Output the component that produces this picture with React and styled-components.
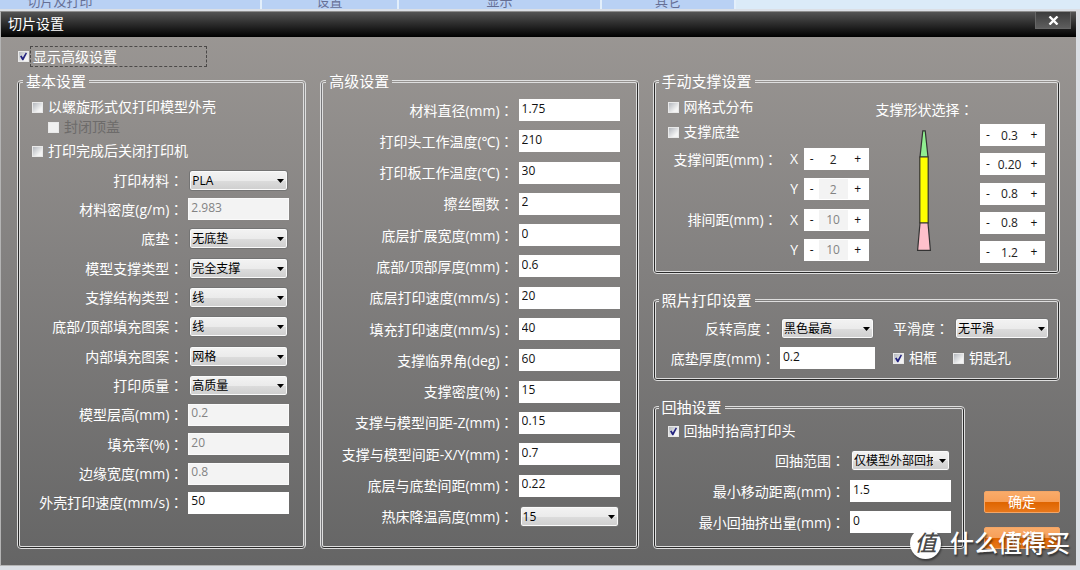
import React from "react";
import styled, { createGlobalStyle } from "styled-components";

const GlobalStyle = createGlobalStyle`
  *, *::before, *::after { box-sizing: border-box; }
  html { background: #d6e3f3; }
  body {
    margin: 0;
    overflow: hidden;
    font-family: "Open Sans", "Noto Sans", "Noto Sans CJK SC", sans-serif;
    font-size: 14px;
    line-height: 20px;
    color: #fff;
  }
  button, input, select { font-family: inherit; margin: 0; }
`;

const Page = styled.div`
  background: #dbdfe5;
`;

/* Ribbon of the application behind the dialog */
const Ribbon = styled.div`
  display: grid;
  grid-template-columns: 262fr 137fr 203fr 134fr 344fr;
  height: 9px;
  overflow: hidden;
  background: #dbebf8;
`;

const RibbonGroup = styled.div`
  display: flex;
  align-items: flex-end;
  justify-content: center;
  height: 9px;
  padding-right: ${(p) => p.$shift || 0}px;
  background: #b9d1f4;
  border-right: 2px solid #e3effb;
  color: #666f94;
  font-size: 13px;
  line-height: 16px;
`;

/* Dialog window */
const Window = styled.section`
  margin: 2px 4px 0 0;
  border: 1px solid #b4b4b4;
  border-top-color: #8e8e8e;
  border-right: 0;
  background: linear-gradient(#9c9895, #838180 45%, #656565);
`;

const TitleBar = styled.header`
  display: flex;
  justify-content: space-between;
  align-items: flex-start;
  height: 25px;
  padding: 0 5px 0 7px;
  background: linear-gradient(#545454, #000);
`;

const Title = styled.h1`
  margin: 0;
  font-size: 14px;
  font-weight: 400;
  line-height: 24px;
`;

const CloseButton = styled.button`
  display: flex;
  align-items: center;
  justify-content: center;
  width: 36px;
  height: 17px;
  padding: 0;
  border: 1px solid #666;
  border-top: 0;
  background: linear-gradient(#3c3c3c, #5e5e5e);
`;

const Body = styled.div`
  padding: 9px 16px 16px;
`;

const Columns = styled.div`
  display: grid;
  grid-template-columns: 289fr 318fr 407fr;
  column-gap: 14px;
  margin-top: 4px;
`;

const RightColumn = styled.div`
  display: flex;
  flex-direction: column;
  gap: 16px;
`;

const BottomRow = styled.div`
  display: flex;
  flex: 1;
  gap: 19px;
`;

/* Group box: double light frame whose gap is dark on some sides */
const Group = styled.fieldset`
  min-width: 0;
  margin: 0;
  padding: 0;
  flex: ${(p) => p.$flex || "none"};
  border: 3px double #dedede;
  border-radius: 4px;
  background-origin: border-box;
  background-repeat: no-repeat;
  background-image:
    linear-gradient(#2a2a2a, #2a2a2a),
    linear-gradient(${(p) => (p.$left ? "#2a2a2a, #2a2a2a" : "#77777a, #77777a")}),
    linear-gradient(${(p) => (p.$right ? "#2a2a2a, #2a2a2a" : "#8b8b8b, #8b8b8b")});
  background-size: calc(100% - 4px) 1px, 1px calc(100% - 4px), 1px calc(100% - 4px);
  background-position: 2px calc(100% - 1px), 1px 2px, calc(100% - 1px) 2px;
`;

const GroupBody = styled.div`
  padding: ${(p) => p.$pad};
`;

const Legend = styled.legend`
  margin-left: 3px;
  padding: 0 3px;
  height: 20px;
  font-size: 15px;
  line-height: 20px;
`;

const Stack = styled.div`
  display: flex;
  flex-direction: column;
  gap: ${(p) => p.$gap || 0}px;
`;

const SpacedRows = styled.div`
  display: flex;
  flex-direction: column;
  justify-content: space-between;
  min-height: ${(p) => p.$min}px;
  margin-top: ${(p) => p.$top || 0}px;
`;

const Row = styled.div`
  display: flex;
  align-items: center;
  justify-content: flex-end;
  height: 22px;
`;

const Label = styled.label`
  white-space: nowrap;
  padding-right: 5px;
`;

const Colon = styled.span`
  font-family: "Noto Sans CJK TC", sans-serif;
`;

const TextInput = styled.input`
  flex: none;
  width: ${(p) => p.$w || 101}px;
  height: 22px;
  padding: 0 3px 4px 2px;
  border: 1px solid #fff;
  border-radius: 0;
  background: #fff;
  color: #111;
  font-size: 12px;
  line-height: 16px;

  &:disabled {
    border-color: #fafafa;
    background: #f3f3f3;
    color: #838383;
  }
`;

const SelectBox = styled.span`
  position: relative;
  flex: none;
  width: ${(p) => p.$w || 101}px;
  height: 21px;
  padding: 0 1px;
`;

const SelectInput = styled.select`
  appearance: none;
  display: block;
  width: 100%;
  height: 21px;
  padding: 0 16px 0 2px;
  border: 1px solid #747474;
  border-radius: 3px;
  box-shadow: inset 0 0 0 1px #fafafa;
  background: linear-gradient(#f3f3f3, #ebebeb 50%, #dcdcdc 51%, #cecece);
  color: #000;
  font-size: 12px;
`;

const Arrow = styled.svg`
  position: absolute;
  top: 9px;
  right: 5px;
  pointer-events: none;
`;

const CheckLabel = styled.label`
  display: inline-flex;
  align-items: center;
  gap: 5px;
  height: 20px;
  white-space: nowrap;
  margin-left: ${(p) => p.$indent || 0}px;
  margin-top: ${(p) => p.$top || 0}px;
  color: ${(p) => (p.$off ? "#6d6b6a" : "#fff")};
`;

const CheckBox = styled.span`
  position: relative;
  flex: none;
  width: 11px;
  height: 11px;
`;

const CheckInput = styled.input`
  appearance: none;
  display: block;
  width: 11px;
  height: 11px;
  border: 1px solid #e9e9e9;
  background: linear-gradient(135deg, #b4b8be, #f4f4f4 75%);

  &:disabled { background: #f0f0f0; }
  & + svg { display: none; }
  &:checked + svg { display: block; }
`;

const Tick = styled.svg`
  position: absolute;
  inset: 0;
  pointer-events: none;
`;

const FocusText = styled.span`
  width: 177px;
  height: 21px;
  padding-left: 2px;
  border: 1px dashed #4b4948;
  line-height: 19px;
`;

const HeadCheck = styled(CheckLabel)`
  display: flex;
  gap: 1px;
  height: 21px;
  margin-left: 1px;
`;

const StepperBox = styled.span`
  display: flex;
  flex: none;
  height: 22px;
  border: 1px solid #fff;
  background: #fff;
`;

const StepButton = styled.button`
  width: ${(p) => p.$w}px;
  padding: 0;
  border: 0;
  background: #fff;
  color: #111;
  font-size: 12px;
  line-height: 18px;
`;

const StepValue = styled.input`
  width: 29px;
  padding: 0;
  border: 0;
  background: #fff;
  color: #222;
  font-size: 12px;
  text-align: center;

  &:disabled {
    background: #f3f3f3;
    color: #838383;
  }
`;

const Axis = styled.span`
  width: 11px;
  margin: 0 4px 0 6px;
  text-align: center;
`;

const ManualLayout = styled.div`
  display: flex;
  gap: 7px;
`;

const ManualLeft = styled.div`
  flex: none;
  width: 201px;
`;

const ManualRight = styled.div`
  flex: 1;
  padding-top: 2px;
`;

const ShapeRow = styled.div`
  display: flex;
  justify-content: space-between;
  margin-top: 4px;
  padding-left: 40px;
`;

const ShapeDrawing = styled.svg`
  margin-top: 6px;
`;

const PhotoTail = styled.div`
  display: flex;
  flex: none;
  justify-content: ${(p) => (p.$spread ? "space-between" : "flex-start")};
  align-items: center;
  gap: ${(p) => (p.$spread ? 0 : 16)}px;
  width: 174px;
  padding-left: 18px;
`;

const Actions = styled.div`
  display: flex;
  flex: none;
  flex-direction: column;
  justify-content: flex-end;
  gap: 14px;
  width: 76px;
`;

const ActionButton = styled.button`
  height: 22px;
  padding: 0;
  border: 1px solid #f3a566;
  border-radius: 2px;
  background: linear-gradient(#f9ab69, #f7a05a 48%, #df6500 52%, #e8771a);
  color: #fff;
  font-size: 14px;
  line-height: 20px;
`;

const Watermark = styled.div`
  position: absolute;
  right: 10px;
  top: 527px;
  display: flex;
  align-items: center;
  gap: 9px;
  height: 32px;
  font-size: 24px;
  font-weight: 500;
  line-height: 32px;
  white-space: nowrap;
  text-shadow: 1px 2px 2px rgba(0, 0, 0, 0.55);
  pointer-events: none;
`;

const Seal = styled.span`
  width: 31px;
  height: 31px;
  border-radius: 50%;
  background: #fff;
  box-shadow: 1px 2px 2px rgba(0, 0, 0, 0.4);
  color: #4a4a4a;
  font-size: 22px;
  font-style: italic;
  line-height: 29px;
  text-align: center;
  text-shadow: none;
`;

const Footer = styled.div`
  height: 12px;
  padding: 0 0 0 409px;
`;

function Caption({ id, text }) {
  return (
    <Label htmlFor={id}>
      {text}
      <Colon>：</Colon>
    </Label>
  );
}

function Select({ id, value, w }) {
  return (
    <SelectBox $w={w}>
      <SelectInput id={id} defaultValue={value}>
        <option>{value}</option>
      </SelectInput>
      <Arrow width="7" height="4" viewBox="0 0 7 4" aria-hidden="true">
        <path d="M0 0H7L3.5 4Z" fill="#000" />
      </Arrow>
    </SelectBox>
  );
}

function CheckMark({ checked, disabled }) {
  return (
    <CheckBox>
      <CheckInput type="checkbox" defaultChecked={checked} disabled={disabled} />
      <Tick width="11" height="11" viewBox="0 0 11 11" aria-hidden="true">
        <path d="M2 5.2L3.6 4.6L4.8 6.6L7.8 1.6L9 2.2L5.4 9.2L4.2 9.2Z" fill="#23237f" />
      </Tick>
    </CheckBox>
  );
}

function Check({ text, checked, disabled, ...rest }) {
  return (
    <CheckLabel $off={disabled} {...rest}>
      <CheckMark checked={checked} disabled={disabled} />
      {text}
    </CheckLabel>
  );
}

function Stepper({ id, value, label, disabled }) {
  return (
    <StepperBox>
      <StepButton type="button" $w={14} aria-label={`${label} 减`}>-</StepButton>
      <StepValue id={id} aria-label={label} defaultValue={value} disabled={disabled} />
      <StepButton type="button" $w={20} aria-label={`${label} 加`}>+</StepButton>
    </StepperBox>
  );
}

function Field({ id, text, value, kind }) {
  return (
    <Row>
      <Caption id={id} text={text} />
      {kind === "select" ? (
        <Select id={id} value={value} />
      ) : (
        <TextInput id={id} defaultValue={value} disabled={kind === "off"} />
      )}
    </Row>
  );
}

const basicFields = [
  ["打印材料", "PLA", "select"],
  ["材料密度(g/m)", "2.983", "off"],
  ["底垫", "无底垫", "select"],
  ["模型支撑类型", "完全支撑", "select"],
  ["支撑结构类型", "线", "select"],
  ["底部/顶部填充图案", "线", "select"],
  ["内部填充图案", "网格", "select"],
  ["打印质量", "高质量", "select"],
  ["模型层高(mm)", "0.2", "off"],
  ["填充率(%)", "20", "off"],
  ["边缘宽度(mm)", "0.8", "off"],
  ["外壳打印速度(mm/s)", "50"],
];

const advancedFields = [
  ["材料直径(mm)", "1.75"],
  ["打印头工作温度(℃)", "210"],
  ["打印板工作温度(℃)", "30"],
  ["擦丝圈数", "2"],
  ["底层扩展宽度(mm)", "0"],
  ["底部/顶部厚度(mm)", "0.6"],
  ["底层打印速度(mm/s)", "20"],
  ["填充打印速度(mm/s)", "40"],
  ["支撑临界角(deg)", "60"],
  ["支撑密度(%)", "15"],
  ["支撑与模型间距-Z(mm)", "0.15"],
  ["支撑与模型间距-X/Y(mm)", "0.7"],
  ["底层与底垫间距(mm)", "0.22"],
  ["热床降温高度(mm)", "15", "select"],
];

const retractFields = [
  ["回抽范围", "仅模型外部回抽", "select"],
  ["最小移动距离(mm)", "1.5"],
  ["最小回抽挤出量(mm)", "0"],
];

const spacings = [
  ["支撑间距(mm)", "X", "2", false],
  ["", "Y", "2", true],
  ["排间距(mm)", "X", "10", true],
  ["", "Y", "10", true],
];

const shapeValues = ["0.3", "0.20", "0.8", "0.8", "1.2"];

const renderFields = (prefix, fields) =>
  fields.map(([text, value, kind], i) => (
    <Field key={text} id={`${prefix}-${i}`} text={text} value={value} kind={kind} />
  ));

export default function App() {
  return (
    <Page>
      <GlobalStyle />
      <Ribbon>
        <RibbonGroup $shift={140}>切片及打印</RibbonGroup>
        <RibbonGroup>设置</RibbonGroup>
        <RibbonGroup>显示</RibbonGroup>
        <RibbonGroup>其它</RibbonGroup>
      </Ribbon>

      <Window>
        <TitleBar>
          <Title>切片设置</Title>
          <CloseButton type="button" aria-label="关闭">
            <svg width="11" height="9" viewBox="0 0 11 9" aria-hidden="true">
              <path d="M1.5 0.5L9.5 8.5M9.5 0.5L1.5 8.5" stroke="#fff" strokeWidth="2.4" />
            </svg>
          </CloseButton>
        </TitleBar>

        <Body>
          <HeadCheck>
            <CheckMark checked />
            <FocusText>显示高级设置</FocusText>
          </HeadCheck>

          <Columns>
            <Group $left>
              <Legend>基本设置</Legend>
              <GroupBody $pad="6px 14px 32px 12px">
                <Stack>
                  <Check text="以螺旋形式仅打印模型外壳" />
                  <Check text="封闭顶盖" disabled $indent={16} />
                  <Check text="打印完成后关闭打印机" $top={4} />
                </Stack>
                <SpacedRows $min={345} $top={8}>
                  {renderFields("basic", basicFields)}
                </SpacedRows>
              </GroupBody>
            </Group>

            <Group $right>
              <Legend>高级设置</Legend>
              <GroupBody $pad="8px 16px 0 0">
                <SpacedRows $min={429}>{renderFields("advanced", advancedFields)}</SpacedRows>
              </GroupBody>
            </Group>

            <RightColumn>
              <Group $left $right>
                <Legend>手动支撑设置</Legend>
                <GroupBody $pad="6px 12px 8px">
                  <ManualLayout>
                    <ManualLeft>
                      <Stack $gap={5}>
                        <Check text="网格式分布" />
                        <Check text="支撑底垫" />
                      </Stack>
                      <SpacedRows $min={113} $top={6}>
                        {spacings.map(([text, axis, value, off], i) => (
                          <Row key={i}>
                            {text && <Caption id={`spacing-${i}`} text={text} />}
                            <Axis>{axis}</Axis>
                            <Stepper
                              id={`spacing-${i}`}
                              label={`间距 ${axis}`}
                              value={value}
                              disabled={off}
                            />
                          </Row>
                        ))}
                      </SpacedRows>
                    </ManualLeft>
                    <ManualRight>
                      <div>
                        支撑形状选择<Colon>：</Colon>
                      </div>
                      <ShapeRow>
                        <ShapeDrawing width="16" height="122" viewBox="0 0 16 122" aria-hidden="true">
                          <g stroke="#333" strokeWidth="1.2">
                            <path d="M6.8 0.8H9.2L12 27H4Z" fill="#90ee90" />
                            <path d="M3.8 27H12.2V93H3.8Z" fill="#ffff00" />
                            <path d="M4 93H12L14.4 120.4H1.6Z" fill="#ffc0cb" />
                          </g>
                        </ShapeDrawing>
                        <SpacedRows $min={139}>
                          {shapeValues.map((value, i) => (
                            <Stepper key={i} label={`支撑形状 ${i + 1}`} value={value} />
                          ))}
                        </SpacedRows>
                      </ShapeRow>
                    </ManualRight>
                  </ManualLayout>
                </GroupBody>
              </Group>

              <Group $left $right>
                <Legend>照片打印设置</Legend>
                <GroupBody $pad="7px 8px 9px 12px">
                  <Stack $gap={8}>
                    <Row>
                      <Caption id="photo-invert" text="反转高度" />
                      <Select id="photo-invert" value="黑色最高" w={95} />
                      <PhotoTail $spread>
                        <Caption id="photo-smooth" text="平滑度" />
                        <Select id="photo-smooth" value="无平滑" w={96} />
                      </PhotoTail>
                    </Row>
                    <Row>
                      <Caption id="photo-base" text="底垫厚度(mm)" />
                      <TextInput id="photo-base" defaultValue="0.2" $w={95} />
                      <PhotoTail>
                        <Check text="相框" checked />
                        <Check text="钥匙孔" />
                      </PhotoTail>
                    </Row>
                  </Stack>
                </GroupBody>
              </Group>

              <BottomRow>
                <Group $flex="1" $left $right>
                  <Legend>回抽设置</Legend>
                  <GroupBody $pad="4px 11px 10px 12px">
                    <Stack $gap={8}>
                      <Check text="回抽时抬高打印头" checked />
                      <Stack $gap={9}>{renderFields("retract", retractFields)}</Stack>
                    </Stack>
                  </GroupBody>
                </Group>
                <Actions>
                  <ActionButton type="button">确定</ActionButton>
                  <ActionButton type="button">取消</ActionButton>
                </Actions>
              </BottomRow>
            </RightColumn>
          </Columns>
        </Body>
      </Window>

      <Footer>
        <svg width="286" height="3" viewBox="0 0 286 3" aria-hidden="true">
          <path d="M1 2.5H285" stroke="#222" strokeWidth="1" strokeDasharray="3 5 9 3 2 6 12 4" />
        </svg>
      </Footer>

      <Watermark>
        <Seal>值</Seal>
        <span>什么值得买</span>
      </Watermark>
    </Page>
  );
}
